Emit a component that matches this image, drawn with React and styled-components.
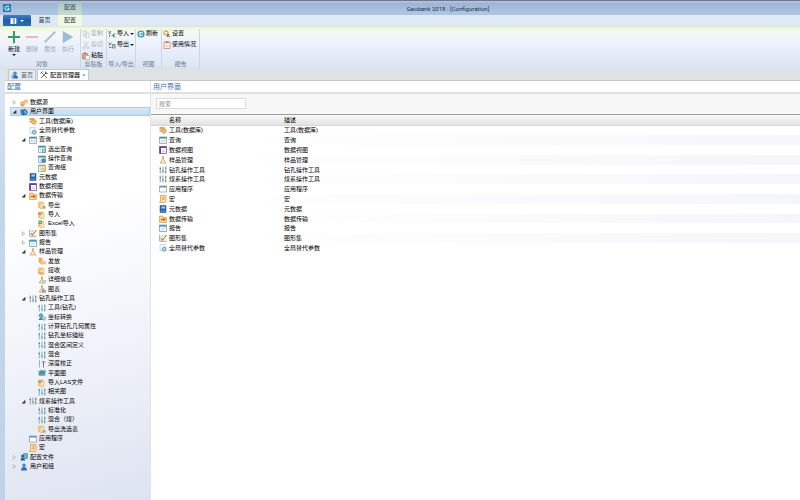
import React from "react";
import styled, { createGlobalStyle } from "styled-components";

const Global = createGlobalStyle`
  * { box-sizing: border-box; }
  body {
    margin: 0;
    font: 6px/9px "Liberation Sans", "Noto Sans CJK SC", sans-serif;
    color: #000;
  }
  button { font: inherit; color: inherit; border: 0; padding: 0; background: none; cursor: pointer; }
  ul { list-style: none; margin: 0; padding: 0; }
`;

/* ---------- icons ---------- */

const gold = "#e3a548";
const goldLight = "#f5d08a";
const teal = "#3f8f98";
const blue = "#2c6cb0";
const grey = "#8d9aa5";

const doc = (
  <>
    <path d="M1 2h9v11H1z" fill={goldLight} stroke={gold} />
    <path d="M4 4h8v11H4z" fill="#fbe3ac" stroke={gold} />
  </>
);

const grid = (accent) => (
  <>
    <path d="M1 2h14v13H1z" fill="#fff" stroke="#7d9aa3" strokeWidth="1.4" />
    <path d="M1 2h14v3H1z" fill={accent} />
    <path d="M5.5 5v10M10.5 5v10M1 8.5h14M1 12h14" stroke="#b9ccd1" strokeWidth="1" />
  </>
);

const flask = (
  <path d="M6 1.5h4M7 2v4.5L2 14h12L9 6.5V2" fill="#fbeac6" stroke="#c79a55" strokeWidth="1.4" />
);

const bars = (color) => (
  <>
    <path d="M2.5 1v14M8 1v14M13.5 1v14" stroke={color} strokeWidth="1.8" />
    <path d="M1 5h3M6.5 10h3M12 4h3M12 12h3" stroke="#42626e" strokeWidth="1.4" />
  </>
);

const person = (
  <>
    <circle cx="8" cy="4.5" r="3.5" fill="#4d86c0" />
    <path d="M2 15c0-5 3-7 6-7s6 2 6 7z" fill={blue} />
  </>
);

const shapes = {
  logo: (
    <>
      <path d="M0 0h16v16H0z" fill="#1685b4" />
      <path d="M12 4.5H6L4 6.5v4L6 12h6V8.5H8.5" fill="none" stroke="#fff" strokeWidth="1.8" />
    </>
  ),
  book: (
    <>
      <path d="M1 2h6v12H1zM9 2h3v12H9z" fill="#fff" />
      <path d="M3 5h2" stroke={blue} />
      <path d="M13.5 3v10" stroke="#fff" />
    </>
  ),
  plus: <path d="M8 1v14M1 8h14" stroke="#3c9a63" strokeWidth="2.4" />,
  minus: <path d="M1 8h14" stroke="#e0b9bf" strokeWidth="2.2" />,
  pencil: <path d="M2 14 14 2" stroke="#b5bcc6" strokeWidth="2.2" />,
  play: <path d="M2 1l12 7-12 7z" fill="#9dbbd6" />,
  copy: (
    <path d="M2 2h7v9H2zM6 6h8v9H6z" fill="#f2f2f4" stroke="#c3c7cd" strokeWidth="1.3" />
  ),
  cut: (
    <>
      <path d="M3 1l8 10M13 1L5 11" stroke="#b9bec6" strokeWidth="1.6" />
      <circle cx="4" cy="13" r="2" fill="none" stroke="#b9bec6" strokeWidth="1.4" />
      <circle cx="12" cy="13" r="2" fill="none" stroke="#b9bec6" strokeWidth="1.4" />
    </>
  ),
  paste: (
    <>
      <path d="M1 3h10v11H1z" fill="#e3a46c" stroke="#a8683a" />
      <path d="M4 1h4v3H4z" fill="#8c7a6c" />
      <path d="M7 7h8v8H7z" fill="#fff" stroke="#8a8f98" />
    </>
  ),
  importTool: (
    <>
      <path d="M1 2l5 6M1 8l5-6M3 9v5" fill="none" stroke="#55636f" strokeWidth="1.6" />
      <path d="M15 8h-4v6h4M7 11h6" fill="none" stroke="#3f7f93" strokeWidth="1.8" />
    </>
  ),
  exportTool: (
    <>
      <path d="M1 3l5 6M2 9l5-6M2 13h5" fill="none" stroke="#55636f" strokeWidth="1.6" />
      <path d="M9 7h5v7H9zM11 10h3" fill="none" stroke="#4a8264" strokeWidth="1.6" />
    </>
  ),
  refresh: (
    <>
      <circle cx="8" cy="8" r="6" fill="#dff2f3" stroke="#2d8ca0" strokeWidth="2.2" />
      <path d="M5 8h6M9 5.5L11.5 8 9 10.5" fill="none" stroke="#2d8ca0" strokeWidth="1.6" />
    </>
  ),
  settings: (
    <>
      <circle cx="6" cy="6" r="4" fill="#fff" stroke="#e0a23f" strokeWidth="2.6" />
      <path d="M8 9l6 5M12 8l-4 6" stroke="#545c66" strokeWidth="2" />
    </>
  ),
  usage: (
    <>
      <path d="M2 2h12v13H2z" fill="#fff6ee" stroke="#c98064" strokeWidth="1.5" />
      <path d="M5 1h6v3H5z" fill="#b96f55" />
      <path d="M5 8h6M5 11h6" stroke="#c9a08f" />
    </>
  ),
  home: (
    <>
      {person}
      <path d="M1 8l4-4v10H1z" fill="#8fb5d8" />
    </>
  ),
  tools: (
    <>
      <path d="M3 3l11 11M13 3L2 14" stroke="#66717c" strokeWidth="1.8" />
      <path d="M1 5l4-4M11 1v4h4" fill="none" stroke="#4d5a66" strokeWidth="2" />
    </>
  ),
  source: (
    <>
      <path d="M8 2h7v6H8z" fill={goldLight} stroke={gold} />
      <ellipse cx="5" cy="10" rx="4" ry="4.5" fill="#f0a94c" stroke="#d08b38" />
      <path d="M1 9h8" stroke="#fbe3ac" />
    </>
  ),
  ui: (
    <>
      <path d="M1 3h8v8H1z" fill="#2f78bd" />
      <path d="M8 2l5 2 2 5-3 5-5-2z" fill="#4c93cf" stroke="#1f5d9c" />
      <path d="M3 11h6v3H3z" fill="#1e5a98" />
      <path d="M9 7l3 2" stroke="#d6e9f8" strokeWidth="1.4" />
    </>
  ),
  toolDb: (
    <>
      <path d="M1 2h10v4H1zM1 7h9v4H1z" fill={gold} />
      <circle cx="10" cy="10" r="4.5" fill={goldLight} stroke="#c98a35" strokeWidth="1.5" />
      <path d="M8 10h4" stroke="#b07428" />
    </>
  ),
  params: (
    <>
      <path d="M2 1h10v12H2z" fill="#f5f8fa" stroke="#a9b9c5" />
      <circle cx="10.5" cy="10.5" r="4" fill="#9fc7d3" stroke="#4c93a8" strokeWidth="1.4" />
      <path d="M9 10.5h3" stroke="#fff" />
    </>
  ),
  query: grid(teal),
  queryPick: (
    <>
      {grid(teal)}
      <path d="M9 8h6v7H9z" fill="#a9d3d3" stroke={teal} />
    </>
  ),
  queryRun: (
    <>
      {grid(teal)}
      <circle cx="11" cy="11" r="3.5" fill="#5aa0b2" stroke="#255f78" strokeWidth="1.5" />
    </>
  ),
  queryGroup: (
    <>
      {grid(gold)}
      <path d="M8 8h7v7H8z" fill={goldLight} stroke={gold} />
    </>
  ),
  meta: (
    <>
      <path d="M2 1h12v14H2z" fill="#2c69ac" stroke="#1d4f8b" />
      <path d="M5 3h7v4H5z" fill="#a8cbe8" />
      <path d="M3 12.5h10" stroke="#8db8dd" />
    </>
  ),
  view: (
    <>
      <path d="M1 1h14v14H1z" fill="#fff" stroke="#7a569a" strokeWidth="1.6" />
      <path d="M1 1h14v3H1zM1 1h3v14H1z" fill="#69408a" />
      <path d="M6 8h7M6 11h7" stroke="#b59bc8" />
    </>
  ),
  transfer: (
    <>
      <path d="M1 2h7v3h7v10H1z" fill={goldLight} stroke="#d99a3c" strokeWidth="1.3" />
      <path d="M4 9h8M9 6l3 3-3 3" fill="none" stroke="#b4542c" strokeWidth="1.8" />
    </>
  ),
  docOut: (
    <>
      {doc}
      <path d="M9 10h6v5H9z" fill="#9faab2" />
    </>
  ),
  docIn: (
    <>
      {doc}
      <path d="M1 3l3 5 3-5" fill="none" stroke="#6b7a86" strokeWidth="1.8" />
    </>
  ),
  excel: (
    <>
      {doc}
      <path d="M1 1h7v7H1z" fill="#5ea673" />
      <path d="M3 3l3 3M6 3L3 6" stroke="#fff" />
    </>
  ),
  chart: (
    <>
      <path d="M1.5 1v13.5H15" fill="none" stroke="#7b8791" strokeWidth="1.5" />
      <path d="M4 8l3 4 8-10" fill="none" stroke="#c08334" strokeWidth="2.4" />
      <path d="M5 4h4" stroke="#5b9c76" strokeWidth="1.5" />
    </>
  ),
  report: (
    <>
      <path d="M1 2h14v13H1z" fill="#f4faff" stroke="#5d93b8" strokeWidth="1.4" />
      <path d="M1 2h14v3.5H1z" fill="#4c9bc7" />
      <path d="M4 9h8M4 12h6" stroke="#a7c6dc" />
    </>
  ),
  flask,
  issue: (
    <>
      <path d="M2 2h6v9H2z" fill="#f0b765" stroke="#d08c3a" />
      <path d="M5 9l3-2 7 3v4H5z" fill={goldLight} stroke={gold} />
    </>
  ),
  receive: (
    <>
      {doc}
      <path d="M2 12h9" stroke="#d08c3a" strokeWidth="2" />
    </>
  ),
  flaskInfo: (
    <>
      {flask}
      <path d="M9 9h6v5H9z" fill="#dbe5ea" stroke={grey} />
    </>
  ),
  flaskChart: (
    <>
      {flask}
      <path d="M9 15V9M12 15V7M15 15v-4" stroke="#557d92" strokeWidth="1.6" />
    </>
  ),
  drill: bars("#7f949d"),
  drillTeal: bars("#6fb0af"),
  coord: (
    <>
      <circle cx="6" cy="5" r="3.5" fill="#74b4c4" stroke="#2d7a94" strokeWidth="1.5" />
      <path d="M1 14c1-4 4-5 6-5l3 5z" fill="#3c88a5" />
      <circle cx="12" cy="11" r="3" fill="#dfeef2" stroke="#4e8296" strokeWidth="1.4" />
    </>
  ),
  depth: (
    <>
      <path d="M3 1v14" stroke="#7ba8ad" strokeWidth="2" strokeDasharray="3 1" />
      <path d="M11 15V3M8 5l3-3 3 3" fill="none" stroke="#53616d" strokeWidth="1.7" />
    </>
  ),
  plan: (
    <>
      <path d="M1 4l5-2 9 1v10l-6 1-8-1z" fill="#63aaa9" />
      <path d="M3 12l4-7 3 4 4-6" fill="none" stroke="#2d6f80" strokeWidth="1.6" />
    </>
  ),
  app: (
    <>
      <path d="M1 2h14v12H1z" fill="#fff" stroke="#7c98ab" strokeWidth="1.4" />
      <path d="M1 2h14v3H1z" fill="#6b93ad" />
    </>
  ),
  macro: (
    <>
      <path d="M3 1h11v12l-2 2H1l2-3z" fill="#fbdfa8" stroke="#d9973f" strokeWidth="1.4" />
      <path d="M6 5h5L7 9h4" fill="none" stroke="#c07a2f" />
    </>
  ),
  profile: (
    <>
      <path d="M7 1h8v10H7z" fill="#70aebf" stroke="#3a7f96" />
      <circle cx="5" cy="6" r="3" fill="#1f5f9f" />
      <path d="M1 15c0-4 2-6 4-6s5 2 5 6z" fill="#1f5f9f" />
    </>
  ),
  person,
};

const Svg = styled.svg`
  display: block;
  flex: none;
  width: ${(p) => p.$size}px;
  height: ${(p) => p.$size}px;
`;

const Icon = ({ name, size = 8 }) => (
  <Svg viewBox="0 0 16 16" fill="none" aria-hidden="true" $size={size}>
    {shapes[name]}
  </Svg>
);

/* ---------- window frame ---------- */

const Window = styled.div`
  min-height: 100vh;
  display: flex;
  flex-direction: column;
  background: linear-gradient(#dfe2e4 0, #dce6f3 80px, #c3d6ec 200px, #bfd2e8);
`;

const TitleBar = styled.header`
  display: grid;
  grid-template-columns: 55px 24px 1fr;
  align-items: stretch;
  height: 15px;
  padding-left: 3px;
  border-top: 1px solid #6c7692;
  background: linear-gradient(#b9c5dd, #9fb3d1 3px, #a7c3e1 9px, #adc6e2);
`;

const LogoBox = styled.div`
  padding-top: 3px;
`;

const ContextTitle = styled.div`
  text-align: center;
  line-height: 13px;
  color: #2f4558;
  background: linear-gradient(#a9c3c9, #cbdcc9);
`;

const AppTitle = styled.h1`
  margin: 0;
  padding-left: 14px;
  text-align: center;
  font-family: Roboto, "Liberation Sans", sans-serif;
  font-size: 6px;
  font-weight: 400;
  line-height: 15px;
  color: #1e2f48;
`;

const TabStrip = styled.nav`
  display: flex;
  height: 11px;
  padding-left: 3px;
  background: #dfe9f6;
`;

const FileButton = styled.button`
  display: flex;
  align-items: center;
  justify-content: center;
  gap: 2px;
  width: 28px;
  background: linear-gradient(#3f7fc6, #1f5da8 50%, #2a70bb);
  border-radius: 1px 1px 0 0;
`;

const RibbonTab = styled.button`
  width: ${(p) => (p.$active ? 24 : 27)}px;
  line-height: 11px;
  color: ${(p) => (p.$active ? "#22343c" : "#2a3b52")};
  background: ${(p) => (p.$active ? "#f2f9e2" : "transparent")};
`;

const Caret = styled.span`
  display: block;
  border: 2px solid transparent;
  border-top-color: ${(p) => p.$color || "#222"};
  border-bottom: 0;
`;

/* ---------- ribbon ---------- */

const Ribbon = styled.section`
  display: flex;
  height: 43px;
  padding: 2px 0 1px 4px;
  border-top: 1px solid #dbe5d8;
  background: linear-gradient(#eef7de, #f5f9f3 6px, #edf2fc 16px, #e4ebfa 28px, #dde6f2 38px, #d9e3e9);
`;

const Group = styled.div`
  display: flex;
  flex-direction: column;
  padding: 0 1px;
  border-right: 1px solid #ccd5e1;
  min-width: ${(p) => p.$min || 0}px;
`;

const GroupBody = styled.div`
  flex: 1;
  display: flex;
  flex-direction: ${(p) => (p.$column ? "column" : "row")};
  gap: ${(p) => (p.$column ? 2 : 0)}px;
`;

const GroupLabel = styled.div`
  text-align: center;
  line-height: 8px;
  color: #71809a;
`;

const BigButton = styled.button`
  display: flex;
  flex-direction: column;
  align-items: center;
  gap: 1px;
  width: 18px;
  padding-top: 1px;
  line-height: 8px;
  color: ${(p) => (p.disabled ? "#a3a9b4" : "#000")};
`;

const SmallButton = styled.button`
  display: flex;
  align-items: center;
  gap: 1px;
  height: 9px;
  white-space: nowrap;
  color: ${(p) => (p.disabled ? "#a9afb9" : "#000")};
`;

const bigTools = [
  { label: "新建", icon: "plus", menu: true },
  { label: "删除", icon: "minus", off: true },
  { label: "属性", icon: "pencil", off: true },
  { label: "执行", icon: "play", off: true },
];

const groups = [
  {
    label: "剪贴板",
    min: 26,
    tools: [
      { label: "复制", icon: "copy", off: true },
      { label: "剪切", icon: "cut", off: true },
      { label: "粘贴", icon: "paste" },
    ],
  },
  {
    label: "导入/导出",
    min: 29,
    tools: [
      { label: "导入", icon: "importTool", menu: true },
      { label: "导出", icon: "exportTool", menu: true },
    ],
  },
  { label: "视图", min: 26, tools: [{ label: "刷新", icon: "refresh" }] },
  {
    label: "报告",
    min: 38,
    tools: [
      { label: "设置", icon: "settings" },
      { label: "使用情况", icon: "usage" },
    ],
  },
];

/* ---------- document tabs ---------- */

const DocTabs = styled.nav`
  display: flex;
  align-items: flex-end;
  gap: 1px;
  height: 12px;
  margin-left: 5px;
  padding-left: 3px;
  border-bottom: 1px solid #c5c8cb;
  background: #dfe2e4;
`;

const DocTab = styled.button`
  display: flex;
  align-items: center;
  gap: 2px;
  height: 11px;
  padding: 0 2px;
  border: 1px solid #c3c8ce;
  border-bottom: 0;
  color: ${(p) => (p.$active ? "#000" : "#5a6672")};
  background: ${(p) => (p.$active ? "#fff" : "#e6ebf1")};
`;

const CloseMark = styled.span`
  color: #6d7884;
`;

/* ---------- content ---------- */

const Content = styled.main`
  flex: 1;
  display: grid;
  grid-template-columns: 145px minmax(0, 1fr);
  gap: 1px;
  margin-left: 5px;
  background: #dfe4ec;
`;

const Panel = styled.section`
  display: flex;
  flex-direction: column;
  background: ${(p) => (p.$tinted ? "linear-gradient(165deg, #fff 30%, #f0f2f9 65%, #dde3f1)" : "#fff")};
`;

const PanelTitle = styled.h2`
  margin: 0;
  padding: 0 1px 0 2px;
  height: 13px;
  font-size: 7px;
  font-weight: 400;
  line-height: 12px;
  color: #3f6fae;
  background: #fff;
  border-bottom: 2px solid #dedfe0;
`;

const Tree = styled.ul`
  padding: 4px 0;
`;

const TreeRow = styled.li`
  display: flex;
  align-items: center;
  height: 9px;
  margin-left: 5px;
  padding-left: ${(p) => p.$depth * 9 + 2}px;
  white-space: nowrap;
  background: ${(p) => (p.$selected ? "linear-gradient(#dcebfb, #bfdaf5)" : "none")};
  box-shadow: ${(p) => (p.$selected ? "inset 0 0 0 1px #a9cdf0" : "none")};
  &:nth-child(3n) { height: 10px; }
`;

const Toggle = styled.button`
  display: flex;
  align-items: center;
  width: 7px;
  height: 7px;
  margin-right: 1px;
  visibility: ${(p) => (p.$hidden ? "hidden" : "visible")};
`;

const TreeLabel = styled.span`
  padding-left: 2px;
`;

const tree = [
  [0, "source", "数据源", "closed"],
  [0, "ui", "用户界面", "open"],
  [1, "toolDb", "工具(数据库)"],
  [1, "params", "全局替代参数"],
  [1, "query", "查询", "open"],
  [2, "queryPick", "选出查询"],
  [2, "queryRun", "操作查询"],
  [2, "queryGroup", "查询组"],
  [1, "meta", "元数据"],
  [1, "view", "数据视图"],
  [1, "transfer", "数据传输", "open"],
  [2, "docOut", "导出"],
  [2, "docIn", "导入"],
  [2, "excel", "Excel导入"],
  [1, "chart", "图形集", "closed"],
  [1, "report", "报告", "closed"],
  [1, "flask", "样品管理", "open"],
  [2, "issue", "发放"],
  [2, "receive", "接收"],
  [2, "flaskInfo", "详细信息"],
  [2, "flaskChart", "图表"],
  [1, "drill", "钻孔操作工具", "open"],
  [2, "drillTeal", "工具(钻孔)"],
  [2, "coord", "坐标转换"],
  [2, "drillTeal", "计算钻孔几何属性"],
  [2, "drillTeal", "钻孔坐标描绘"],
  [2, "drillTeal", "混合区间定义"],
  [2, "drillTeal", "混合"],
  [2, "depth", "深度校正"],
  [2, "plan", "平面图"],
  [2, "docIn", "导入LAS文件"],
  [2, "drillTeal", "相关图"],
  [1, "drill", "煤系操作工具", "open"],
  [2, "drillTeal", "标准化"],
  [2, "drillTeal", "混合（煤）"],
  [2, "docOut", "导出洗选表"],
  [1, "app", "应用程序"],
  [1, "macro", "宏"],
  [0, "profile", "配置文件", "closed"],
  [0, "person", "用户和组", "closed"],
];

const SearchBar = styled.div`
  height: 21px;
  padding: 4px 5px;
  background: #f7f7f7;
  border-bottom: 1px solid #9c9c9c;
`;

const SearchInput = styled.input`
  display: block;
  width: 90px;
  height: 11px;
  padding: 0 2px;
  font: inherit;
  border: 1px solid #dcdcdc;
  background: #fff;
  &::placeholder { color: #8c8c8c; }
`;

const Table = styled.table`
  width: 100%;
  border-collapse: collapse;
  table-layout: fixed;
  text-align: left;
`;

const NameCol = styled.col`
  width: 132px;
`;

const HeadCell = styled.th`
  height: 10px;
  padding: 0 0 0 ${(p) => (p.$first ? 18 : 1)}px;
  font-weight: 400;
  line-height: 8px;
  background: linear-gradient(#fafafa, #e2e2e2);
  border-bottom: 1px solid #d8d8d8;
`;

const Row = styled.tr`
  height: 10px;
  &:nth-child(5n) { height: 9px; }
  &:nth-child(even) { background: linear-gradient(90deg, #fff 10%, #fbfbfd 50%, #f5f6fa); }
`;

const Cell = styled.td`
  padding: 0 0 0 1px;
  line-height: 8px;
`;

const NameCell = styled.div`
  display: flex;
  align-items: center;
  gap: 2px;
  padding-left: 7px;
`;

const rows = [
  ["toolDb", "工具(数据库)"],
  ["query", "查询"],
  ["view", "数据视图"],
  ["flask", "样品管理"],
  ["drill", "钻孔操作工具"],
  ["drill", "煤系操作工具"],
  ["app", "应用程序"],
  ["macro", "宏"],
  ["meta", "元数据"],
  ["transfer", "数据传输"],
  ["report", "报告"],
  ["chart", "图形集"],
  ["params", "全局替代参数"],
];

const ToggleMark = ({ open }) => (
  <Svg viewBox="0 0 8 8" $size={5} aria-hidden="true">
    {open ? <path d="M7 1v6H1z" fill="#333" /> : <path d="M2 1l4 3-4 3z" fill="#fff" stroke="#9a9a9a" />}
  </Svg>
);

export default function App() {
  return (
    <>
      <Global />
      <Window lang="zh-CN">
        <TitleBar>
          <LogoBox><Icon name="logo" /></LogoBox>
          <ContextTitle>配置</ContextTitle>
          <AppTitle>Geobank 2018 - [Configuration]</AppTitle>
        </TitleBar>
        <TabStrip>
          <FileButton aria-label="文件">
            <Icon name="book" />
            <Caret $color="#fff" />
          </FileButton>
          <RibbonTab>首页</RibbonTab>
          <RibbonTab $active>配置</RibbonTab>
        </TabStrip>
        <Ribbon>
          <Group $min={77}>
            <GroupBody>
              {bigTools.map((t) => (
                <BigButton key={t.label} disabled={t.off}>
                  <Icon name={t.icon} size={14} />
                  {t.label}
                  {t.menu && <Caret />}
                </BigButton>
              ))}
            </GroupBody>
            <GroupLabel>对象</GroupLabel>
          </Group>
          {groups.map((g) => (
            <Group key={g.label} $min={g.min}>
              <GroupBody $column>
                {g.tools.map((t) => (
                  <SmallButton key={t.label} disabled={t.off}>
                    <Icon name={t.icon} />
                    {t.label}
                    {t.menu && <Caret />}
                  </SmallButton>
                ))}
              </GroupBody>
              <GroupLabel>{g.label}</GroupLabel>
            </Group>
          ))}
        </Ribbon>
        <DocTabs>
          <DocTab><Icon name="home" />首页</DocTab>
          <DocTab $active>
            <Icon name="tools" />配置管理器<CloseMark>×</CloseMark>
          </DocTab>
        </DocTabs>
        <Content>
          <Panel $tinted>
            <PanelTitle>配置</PanelTitle>
            <Tree>
              {tree.map(([depth, icon, label, state]) => (
                <TreeRow key={label} $depth={depth} $selected={label === "用户界面"}>
                  <Toggle $hidden={!state} aria-label={label} aria-expanded={state === "open"}>
                    <ToggleMark open={state === "open"} />
                  </Toggle>
                  <Icon name={icon} />
                  <TreeLabel>{label}</TreeLabel>
                </TreeRow>
              ))}
            </Tree>
          </Panel>
          <Panel>
            <PanelTitle>用户界面</PanelTitle>
            <SearchBar>
              <SearchInput type="search" aria-label="搜索" placeholder="搜索" />
            </SearchBar>
            <Table>
              <colgroup><NameCol /><col /></colgroup>
              <thead>
                <tr>
                  <HeadCell $first>名称</HeadCell>
                  <HeadCell>描述</HeadCell>
                </tr>
              </thead>
              <tbody>
                {rows.map(([icon, label]) => (
                  <Row key={label}>
                    <Cell><NameCell><Icon name={icon} />{label}</NameCell></Cell>
                    <Cell>{label}</Cell>
                  </Row>
                ))}
              </tbody>
            </Table>
          </Panel>
        </Content>
      </Window>
    </>
  );
}
